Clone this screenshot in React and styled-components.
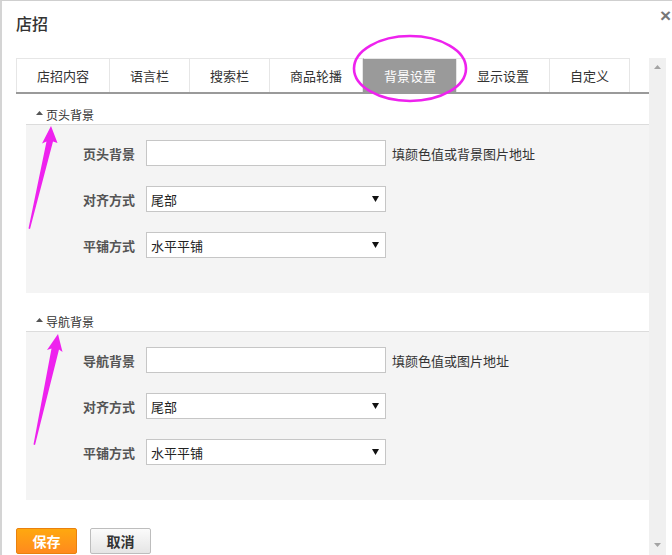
import React from 'react';
import styled, { createGlobalStyle } from 'styled-components';

const GlobalStyle = createGlobalStyle`
  html, body {
    margin: 0;
    padding: 0;
    background: #fff;
    overflow: hidden;
  }
  body {
    font-family: "Noto Sans CJK SC", "Liberation Sans", sans-serif;
    color: #333;
  }
`;

const tabs = ['店招内容', '语言栏', '搜索栏', '商品轮播', '背景设置', '显示设置', '自定义'];

const sections = [
  { title: '页头背景', first: '页头背景', hint: '填颜色值或背景图片地址' },
  { title: '导航背景', first: '导航背景', hint: '填颜色值或图片地址' },
];

function Caret({ up }) {
  return (
    <svg width="7" height="4" viewBox="0 0 7 4">
      <polygon points={up ? '0,4 7,4 3.5,0' : '0,0 7,0 3.5,4'} fill="currentColor" />
    </svg>
  );
}

function FormRow({ label, children }) {
  return (
    <Row>
      <Label>{label}</Label>
      {children}
    </Row>
  );
}

function Select({ value }) {
  return (
    <SelectBox>
      <span>{value}</span>
      <SelectArrow>
        <svg width="7" height="6" viewBox="0 0 7 6">
          <polygon points="0,0 7,0 3.5,6" fill="#111" />
        </svg>
      </SelectArrow>
    </SelectBox>
  );
}

export default function App() {
  return (
    <>
      <GlobalStyle />
      <Dialog>
        <Header>
          <Title>店招</Title>
          <Close>×</Close>
        </Header>
        <Body>
          <Content>
            <TabBar>
              {tabs.map((t) => (
                <Tab key={t} $active={t === '背景设置'}>{t}</Tab>
              ))}
            </TabBar>

            {sections.map((s) => (
              <Section key={s.title}>
                <SectionHead>
                  <HeadCaret><Caret up /></HeadCaret>
                  {s.title}
                </SectionHead>
                <Panel>
                  <FormRow label={s.first}>
                    <TextInput type="text" />
                    <Hint>{s.hint}</Hint>
                  </FormRow>
                  <FormRow label="对齐方式">
                    <Select value="尾部" />
                  </FormRow>
                  <FormRow label="平铺方式">
                    <Select value="水平平铺" />
                  </FormRow>
                </Panel>
              </Section>
            ))}

            <Actions>
              <Button $primary>保存</Button>
              <Button>取消</Button>
            </Actions>
          </Content>
          <Scrollbar>
            <Caret up />
            <Caret />
          </Scrollbar>
        </Body>

        <Marks width="672" height="555" viewBox="0 0 672 555">
          <ellipse cx="410" cy="68.5" rx="56" ry="32.5" fill="none" stroke="#ee22ee" strokeWidth="2.6" />
          <polygon points="51,126 57.5,143 53,141.5 30,229 28.5,228.5 46.5,141.5 42,143.5" fill="#ee22ee" />
          <polygon points="58,334 62.5,352 59,349.5 35,445 33.5,444.5 51.5,348.5 47,350" fill="#ee22ee" />
        </Marks>
      </Dialog>
    </>
  );
}

const Dialog = styled.div`
  position: relative;
  width: 672px;
  height: 555px;
  box-sizing: border-box;
  border-top: 1px solid #cfcfcf;
  border-left: 2px solid #d4d4d4;
  background: #fff;
  overflow: hidden;
`;

const Header = styled.div`
  height: 57px;
  padding: 11px 0 0 14px;
  box-sizing: border-box;
`;

const Title = styled.h2`
  margin: 0;
  font-size: 16px;
  font-weight: 500;
  line-height: 22px;
  color: #333;
`;

const Close = styled.span`
  position: absolute;
  top: 4px;
  right: 1px;
  font-family: "Liberation Sans", sans-serif;
  font-size: 19px;
  font-weight: bold;
  line-height: 22px;
  color: #777;
`;

const Body = styled.div`
  display: flex;
  padding-left: 14px;
`;

const Content = styled.div`
  width: 633px;
`;

const TabBar = styled.div`
  display: flex;
  height: 36px;
  box-sizing: border-box;
  border-bottom: 2px solid #9a9a9a;
`;

const Tab = styled.div`
  padding: 0 20px;
  height: 34px;
  line-height: 34px;
  font-size: 13px;
  white-space: nowrap;
  border: 1px solid #e6e6e6;
  border-bottom: none;
  border-left: ${(p) => (p.$active ? '1px solid #9a9a9a' : 'none')};
  box-sizing: border-box;
  background: ${(p) => (p.$active ? '#9a9a9a' : '#fff')};
  color: ${(p) => (p.$active ? '#fff' : '#333')};
  &:first-child {
    border-left: 1px solid #e6e6e6;
  }
`;

const Section = styled.div`
  margin: 10px 0 0 10px;
  & + & {
    margin-top: 18px;
  }
`;

const SectionHead = styled.div`
  display: flex;
  align-items: center;
  height: 20px;
  padding-left: 10px;
  font-size: 12px;
  color: #333;
  border-bottom: 1px solid #dcdcdc;
`;

const HeadCaret = styled.span`
  display: flex;
  color: #555;
  margin-right: 3px;
  margin-top: -2px;
`;

const Panel = styled.div`
  background: #f4f4f4;
  padding: 15px 0 35px;
  display: flex;
  flex-direction: column;
  gap: 20px;
`;

const Row = styled.div`
  display: flex;
  align-items: center;
  height: 26px;
`;

const Label = styled.label`
  width: 109px;
  margin-right: 11px;
  text-align: right;
  font-size: 13px;
  font-weight: bold;
  color: #555;
`;

const TextInput = styled.input`
  width: 240px;
  height: 26px;
  box-sizing: border-box;
  border: 1px solid #c6c6c6;
  background: #fff;
  padding: 0 4px;
  outline: none;
`;

const Hint = styled.span`
  margin-left: 6px;
  font-size: 13px;
  color: #333;
`;

const SelectBox = styled.div`
  width: 240px;
  height: 26px;
  box-sizing: border-box;
  border: 1px solid #c6c6c6;
  background: #fff;
  display: flex;
  align-items: center;
  justify-content: space-between;
  padding: 0 6px 0 4px;
  font-size: 13px;
  color: #222;
`;

const SelectArrow = styled.span`
  display: flex;
`;

const Actions = styled.div`
  display: flex;
  gap: 13px;
  margin-top: 28px;
`;

const Button = styled.button`
  height: 26px;
  width: ${(p) => (p.$primary ? '61px' : '61px')};
  padding: 0;
  box-sizing: border-box;
  font-family: inherit;
  font-size: 14px;
  font-weight: bold;
  border-radius: 2px;
  border: 1px solid ${(p) => (p.$primary ? '#e9810e' : '#bdbdbd')};
  background: ${(p) =>
    p.$primary
      ? 'linear-gradient(#ffa80f, #ff8a1e)'
      : 'linear-gradient(#fbfbfb, #e5e5e5)'};
  color: ${(p) => (p.$primary ? '#fff' : '#333')};
`;

const Scrollbar = styled.div`
  width: 17px;
  height: 497px;
  background: #f0f0f0;
  display: flex;
  flex-direction: column;
  align-items: center;
  justify-content: space-between;
  padding: 7px 0 8px;
  box-sizing: border-box;
  color: #a3a3a3;
`;

const Marks = styled.svg`
  position: absolute;
  top: -1px;
  left: -2px;
  pointer-events: none;
`;
